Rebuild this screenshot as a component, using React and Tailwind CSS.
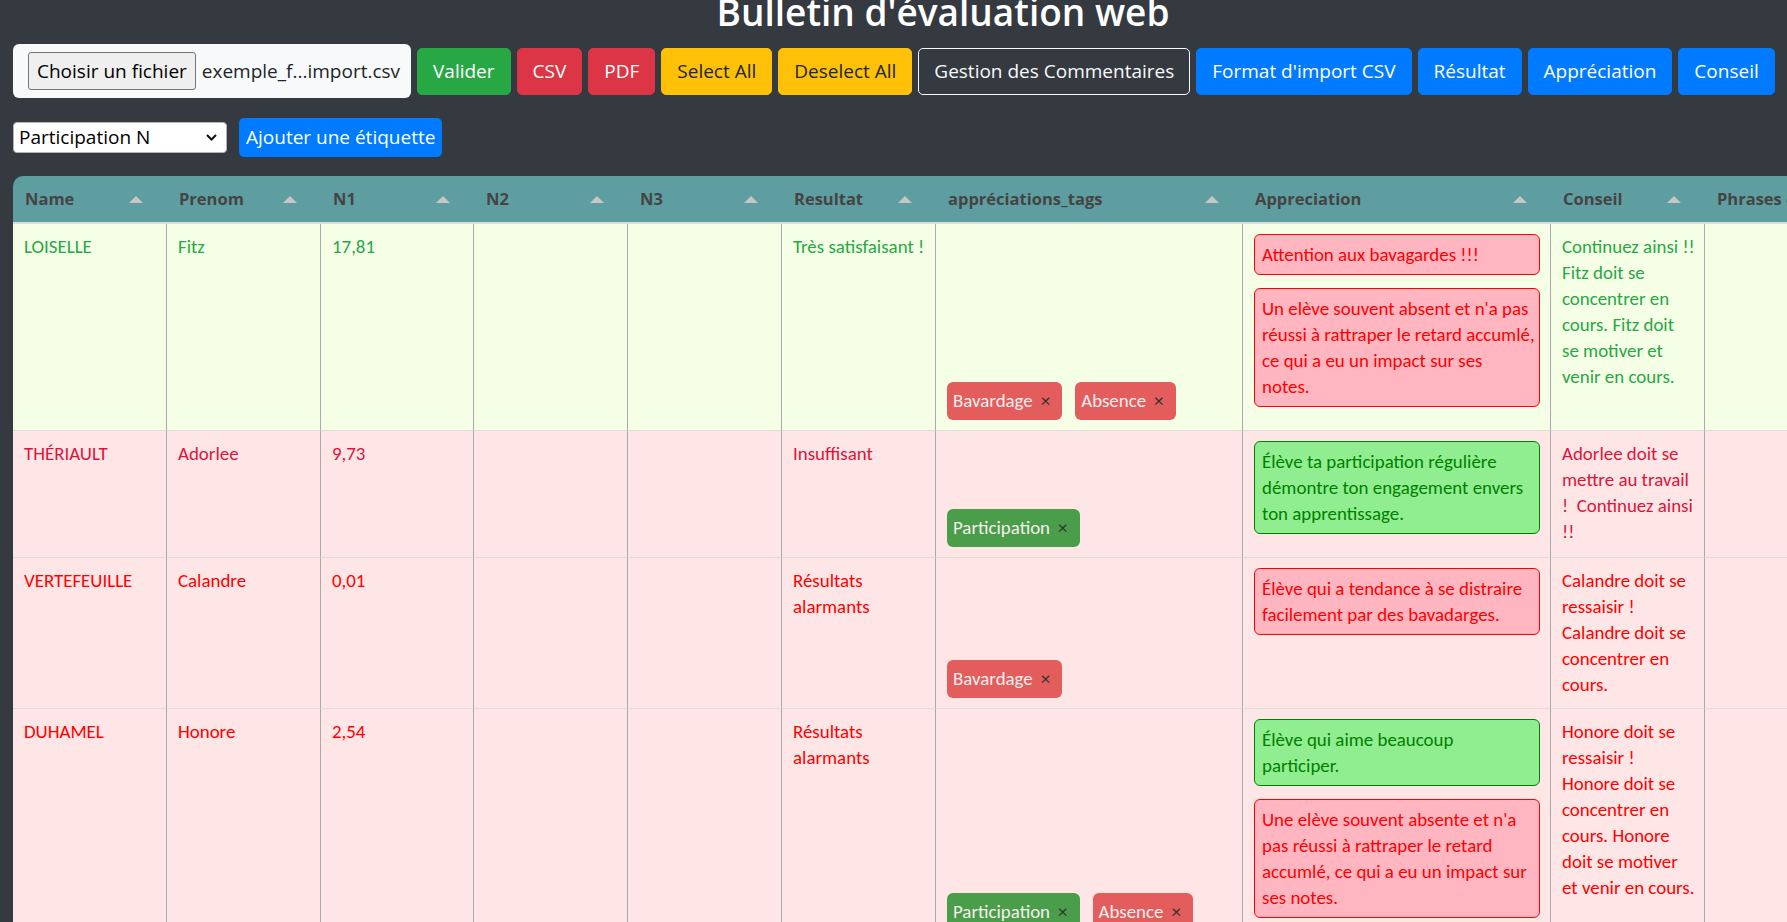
import React from "react";

const ui = "font-['Open_Sans',sans-serif]";
const body = "font-['Carlito','Lato',sans-serif]";

const columns = [
  { label: "Name", w: "w-[154px]" },
  { label: "Prenom", w: "w-[154px]" },
  { label: "N1", w: "w-[153px]" },
  { label: "N2", w: "w-[154px]" },
  { label: "N3", w: "w-[154px]" },
  { label: "Resultat", w: "w-[154px]" },
  { label: "appréciations_tags", w: "w-[307px]" },
  { label: "Appreciation", w: "w-[308px]" },
  { label: "Conseil", w: "w-[154px]" },
  { label: "Phrases conseil", w: "w-[168px]" },
];

// line breaks follow the column widths of the original report
const rows = [
  {
    name: "LOISELLE",
    prenom: "Fitz",
    n1: "17,81",
    resultat: "Très satisfaisant !",
    tags: [
      { label: "Bavardage", bad: true },
      { label: "Absence", bad: true },
    ],
    appreciations: [
      { bad: true, text: "Attention aux bavagardes !!!" },
      {
        bad: true,
        text: "Un elève souvent absent et n'a pas\nréussi à rattraper le retard accumlé,\nce qui a eu un impact sur ses\nnotes.",
      },
    ],
    conseil:
      "Continuez ainsi !!\nFitz doit se\nconcentrer en\ncours. Fitz doit\nse motiver et\nvenir en cours.",
    bg: "bg-[#f5ffe6]",
    color: "text-[#28a745]",
  },
  {
    name: "THÉRIAULT",
    prenom: "Adorlee",
    n1: "9,73",
    resultat: "Insuffisant",
    tags: [{ label: "Participation", bad: false }],
    appreciations: [
      {
        bad: false,
        text: "Élève ta participation régulière\ndémontre ton engagement envers\nton apprentissage.",
      },
    ],
    conseil: "Adorlee doit se\nmettre au travail\n!\u00a0 Continuez ainsi\n!!",
    bg: "bg-[#ffe6e6]",
    color: "text-[#dc143c]",
  },
  {
    name: "VERTEFEUILLE",
    prenom: "Calandre",
    n1: "0,01",
    resultat: "Résultats\nalarmants",
    tags: [{ label: "Bavardage", bad: true }],
    appreciations: [
      {
        bad: true,
        text: "Élève qui a tendance à se distraire\nfacilement par des bavadarges.",
      },
    ],
    conseil: "Calandre doit se\nressaisir !\nCalandre doit se\nconcentrer en\ncours.",
    bg: "bg-[#ffe6e6]",
    color: "text-[#ff0000]",
  },
  {
    name: "DUHAMEL",
    prenom: "Honore",
    n1: "2,54",
    resultat: "Résultats\nalarmants",
    tags: [
      { label: "Participation", bad: false },
      { label: "Absence", bad: true },
    ],
    appreciations: [
      { bad: false, text: "Élève qui aime beaucoup\nparticiper." },
      {
        bad: true,
        text: "Une elève souvent absente et n'a\npas réussi à rattraper le retard\naccumlé, ce qui a eu un impact sur\nses notes.",
      },
    ],
    conseil:
      "Honore doit se\nressaisir !\nHonore doit se\nconcentrer en\ncours. Honore\ndoit se motiver\net venir en cours.",
    bg: "bg-[#ffe6e6]",
    color: "text-[#ff0000]",
  },
];

const buttons = [
  { label: "Valider", cls: "bg-[#28a745] text-white border-[#28a745]" },
  { label: "CSV", cls: "bg-[#dc3545] text-white border-[#dc3545]" },
  { label: "PDF", cls: "bg-[#dc3545] text-white border-[#dc3545]" },
  { label: "Select All", cls: "bg-[#ffc107] text-[#212529] border-[#ffc107]" },
  { label: "Deselect All", cls: "bg-[#ffc107] text-[#212529] border-[#ffc107]" },
  { label: "Gestion des Commentaires", cls: "bg-transparent text-[#f8f9fa] border-[#f8f9fa]" },
  { label: "Format d'import CSV", cls: "bg-[#007bff] text-white border-[#007bff]" },
  { label: "Résultat", cls: "bg-[#007bff] text-white border-[#007bff]" },
  { label: "Appréciation", cls: "bg-[#007bff] text-white border-[#007bff]" },
  { label: "Conseil", cls: "bg-[#007bff] text-white border-[#007bff]" },
];

const SortArrow = () => (
  <svg width="14" height="7" viewBox="0 0 14 7" className="shrink-0">
    <polygon points="7,0 14,7 0,7" fill="#c6c6c6" />
  </svg>
);

const Tag = ({ label, bad }) => (
  <span
    className={`inline-flex items-center h-[38px] pl-[6px] pr-[12px] rounded-[6px] ${
      bad ? "bg-[#e35d5d]" : "bg-[#4a9e4a]"
    }`}
  >
    <span className="text-[#f6eeee]">{label}</span>
    <span className="ml-[8px] text-[#333] text-[19px]">×</span>
  </span>
);

const Cell = ({ children, className = "" }) => (
  <td
    className={`pl-[11px] py-[10px] border-r border-b border-r-[#aaa] border-b-[#ddd] ${className}`}
  >
    {children}
  </td>
);

export default function App() {
  return (
    <div className={`h-screen overflow-hidden bg-[#343a40] ${ui}`}>
      <div className="w-[1886px]">
        <h1 className="mt-[-12px] mb-[8px] text-center text-[37px] leading-[48px] font-semibold text-white">
          Bulletin d'évaluation web
        </h1>

        <div className="flex items-center gap-[6px] pl-[13px]">
          <div className="flex items-center w-[398px] h-[54px] rounded-[6px] bg-[#f8f9fa] pl-[15px]">
            <span className="flex items-center h-[38px] px-[8px] border border-[#767676] bg-[#efefef] rounded-[3px] text-[19px] text-black">
              Choisir un fichier
            </span>
            <span className="ml-[6px] text-[19px] text-[#212529]">exemple_f...import.csv</span>
          </div>
          {buttons.map((b) => (
            <button
              key={b.label}
              className={`h-[47px] px-[15px] border rounded-[5px] text-[19px] leading-[28px] ${b.cls}`}
            >
              {b.label}
            </button>
          ))}
        </div>

        <div className="flex items-center gap-[12px] pl-[13px] mt-[20px]">
          <div className="flex items-center justify-between w-[214px] h-[31px] pl-[5px] pr-[9px] bg-white border border-[#b5b5b5] rounded-[4px] text-[19px] text-black">
            <span>Participation N</span>
            <svg width="11" height="7" viewBox="0 0 11 7">
              <polyline points="1,1 5.5,5.5 10,1" fill="none" stroke="#111" strokeWidth="2" />
            </svg>
          </div>
          <button className="h-[39px] px-[7px] bg-[#007bff] rounded-[5px] text-[19px] text-white">
            Ajouter une étiquette
          </button>
        </div>

        <div className="mt-[19px] ml-[13px] w-[1860px] rounded-tl-[10px] rounded-tr-[10px] overflow-hidden">
          <table className="table-fixed border-separate border-spacing-0 w-[1860px]">
            <colgroup>
              {columns.map((c) => (
                <col key={c.label} className={c.w} />
              ))}
            </colgroup>
            <thead>
              <tr className="bg-[#5f9ea0]">
                {columns.map((c) => (
                  <th
                    key={c.label}
                    className="h-[48px] pl-[12px] pr-[24px] text-left border-b-2 border-[#ddd] font-bold text-[16.5px] text-[#444]"
                  >
                    <div className="flex items-center justify-between whitespace-nowrap">
                      <span>{c.label}</span>
                      <SortArrow />
                    </div>
                  </th>
                ))}
              </tr>
            </thead>
            <tbody className={`${body} text-[18.9px] leading-[26px] whitespace-pre-line`}>
              {rows.map((r) => (
                <tr key={r.name} className={`${r.bg} ${r.color}`}>
                  <Cell className="align-top pr-[10px]">{r.name}</Cell>
                  <Cell className="align-top pr-[10px]">{r.prenom}</Cell>
                  <Cell className="align-top pr-[10px]">{r.n1}</Cell>
                  <Cell className="align-top pr-[10px]" />
                  <Cell className="align-top pr-[10px]" />
                  <Cell className="align-top pr-[5px]">{r.resultat}</Cell>
                  <Cell className="align-bottom pr-[10px]">
                    <div className="flex flex-wrap gap-[13px]">
                      {r.tags.map((t) => (
                        <Tag key={t.label} {...t} />
                      ))}
                    </div>
                  </Cell>
                  <Cell className="align-top pr-[10px]">
                    {r.appreciations.map((a, i) => (
                      <div
                        key={i}
                        className={`mb-[13px] pl-[7px] pr-[4px] py-[6.5px] border rounded-[6px] ${
                          a.bad
                            ? "bg-[#ffb6c1] border-[#ff0000] text-[#ff0000]"
                            : "bg-[#90ee90] border-[#008000] text-[#008000]"
                        }`}
                      >
                        {a.text}
                      </div>
                    ))}
                  </Cell>
                  <Cell className="align-top pr-[4px]">{r.conseil}</Cell>
                  <Cell className="align-top pr-[10px]" />
                </tr>
              ))}
            </tbody>
          </table>
        </div>
      </div>
    </div>
  );
}
